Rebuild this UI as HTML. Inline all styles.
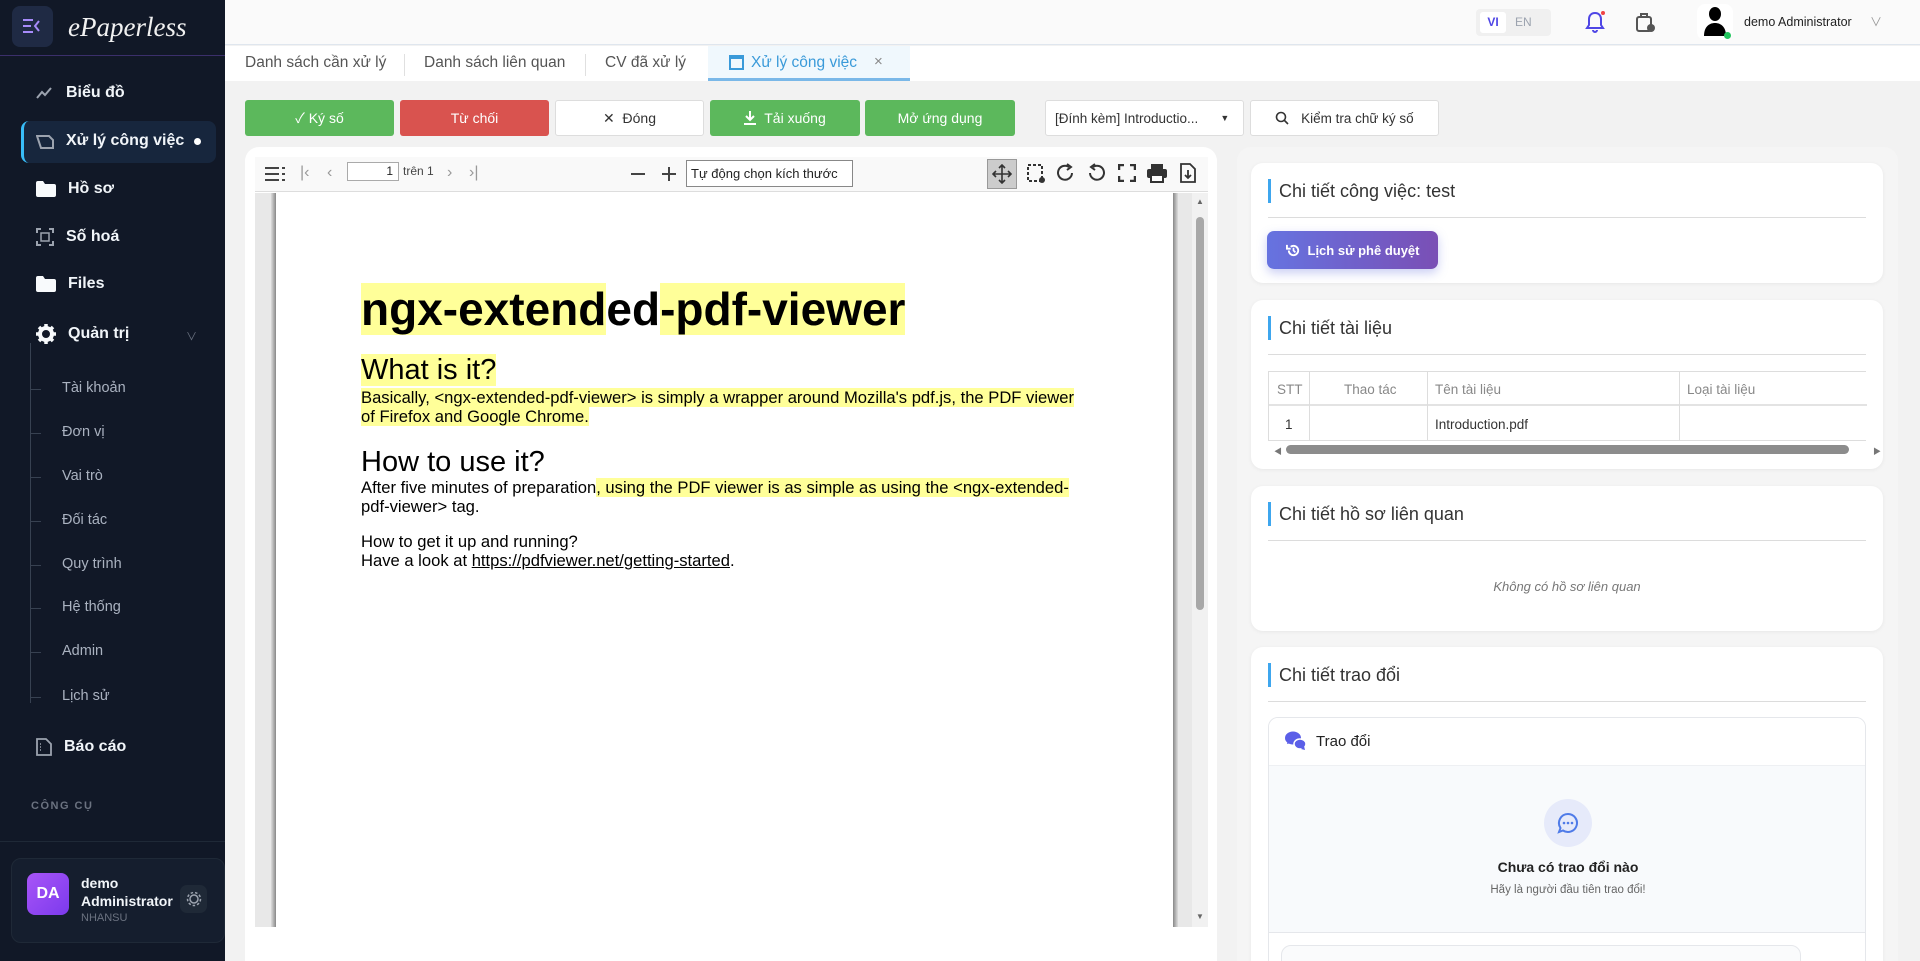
<!DOCTYPE html>
<html style="width:1920px;height:961px;overflow:hidden"><head><meta charset="utf-8">
<style>
*{box-sizing:border-box;margin:0;padding:0}
html,body{width:1920px;height:961px;overflow:hidden}
body{background:#f2f2f2;font-family:"Liberation Sans","Noto Sans CJK SC",sans-serif;position:relative;color:#333}
.a{position:absolute}
#sb{left:0;top:0;width:225px;height:961px;background:#111827;color:#e5e7eb}
.mi{position:absolute;left:36px;font-size:16px;font-weight:bold;color:#f1f5f9;display:flex;align-items:center;gap:12px}
.sub{position:absolute;left:62px;font-size:14.5px;color:#aab2c0}
.tick{position:absolute;left:31px;width:10px;height:1px;background:#374151}
.btn{position:absolute;top:100px;height:36px;border-radius:3px;font-size:14px;display:flex;align-items:center;justify-content:center;gap:8px;color:#fff}
.card{position:absolute;left:1251px;width:632px;background:#fff;border-radius:12px;box-shadow:0 1px 4px rgba(0,0,0,.06);overflow:hidden}
.ct{position:absolute;left:17px;font-size:18px;color:#333;border-left:3px solid #3ea6ee;padding-left:8px;line-height:24px}
.hr{position:absolute;left:17px;right:17px;height:1px;background:#dcdcdc}
.pl{position:absolute;left:361px;color:#000;font-family:"Liberation Sans",sans-serif;white-space:nowrap}
.hl{background:#ffff99}
.tb{position:absolute;top:164px;color:#555;font-size:16px}
</style></head><body>

<!-- header -->
<div class="a" style="left:225px;top:0;width:1695px;height:45px;background:#fafafa;border-bottom:1px solid #dfe6ee"></div>
<div class="a" style="left:1476px;top:9px;width:75px;height:27px;background:#f0f0f0;border-radius:4px"></div>
<div class="a" style="left:1480px;top:12px;width:26px;height:21px;background:#fff;border-radius:3px;font-size:12px;font-weight:bold;color:#4f46e5;text-align:center;line-height:21px">VI</div>
<div class="a" style="left:1515px;top:12px;font-size:12px;color:#9ca3af;line-height:21px">EN</div>
<svg class="a" style="left:1584px;top:10px" width="22" height="24" viewBox="0 0 22 24"><path d="M11 3c-4 0-6 3-6 6v6l-2 3h16l-2-3V9c0-3-2-6-6-6zM9 20a2 2 0 0 0 4 0" fill="none" stroke="#4f46e5" stroke-width="2"/><circle cx="19" cy="3" r="2" fill="#ef4444"/></svg>
<svg class="a" style="left:1634px;top:10px" width="24" height="24" viewBox="0 0 24 24"><rect x="3" y="7" width="14" height="14" rx="2" fill="none" stroke="#555" stroke-width="2"/><path d="M7 7V4h6v3" fill="none" stroke="#555" stroke-width="2"/><circle cx="17" cy="18" r="4" fill="#555"/></svg>
<div class="a" style="left:1697px;top:4px;width:36px;height:36px;background:#fff;border-radius:8px"></div>
<svg class="a" style="left:1703px;top:6px" width="24" height="30" viewBox="0 0 24 30"><ellipse cx="12" cy="8" rx="6" ry="7" fill="#000"/><path d="M1 30c0-9 5-13 11-13s11 4 11 13z" fill="#000"/></svg>
<div class="a" style="left:1724px;top:32px;width:7px;height:7px;border-radius:50%;background:#22c55e"></div>
<div class="a" style="left:1744px;top:15px;font-size:12.5px;color:#222">demo Administrator</div>
<div class="a" style="left:1870px;top:13px;font-size:12px;color:#999">&#x2228;</div>

<!-- tabs -->
<div class="a" style="left:225px;top:46px;width:1695px;height:35px;background:#fff"></div>
<div class="a" style="left:245px;top:54px;font-size:15.5px;color:#555">Danh sách cần xử lý</div>
<div class="a" style="left:404px;top:54px;width:1px;height:22px;background:#e0e0e0"></div>
<div class="a" style="left:424px;top:54px;font-size:15.5px;color:#555">Danh sách liên quan</div>
<div class="a" style="left:585px;top:54px;width:1px;height:22px;background:#e0e0e0"></div>
<div class="a" style="left:605px;top:54px;font-size:15.5px;color:#555">CV đã xử lý</div>
<div class="a" style="left:708px;top:46px;width:202px;height:35px;background:#f0f8fd;border-bottom:3px solid #7ab8e8"></div>
<svg class="a" style="left:729px;top:55px" width="15" height="15" viewBox="0 0 15 15"><rect x="1" y="1" width="13" height="13" fill="none" stroke="#3a9ad9" stroke-width="2"/><rect x="1" y="1" width="13" height="3" fill="#3a9ad9"/></svg>
<div class="a" style="left:751px;top:54px;font-size:15.5px;color:#3a9ad9">Xử lý công việc</div>
<div class="a" style="left:874px;top:53px;font-size:15px;color:#888">×</div>

<!-- action buttons -->
<div class="btn" style="left:245px;width:149px;background:#5cb85c">&#x2713; Ký số</div>
<div class="btn" style="left:400px;width:149px;background:#d9534f">Từ chối</div>
<div class="btn" style="left:555px;width:149px;background:#fff;color:#333;border:1px solid #ddd">✕&nbsp; Đóng</div>
<div class="btn" style="left:710px;width:150px;background:#5cb85c"><svg width="12" height="14" viewBox="0 0 12 14"><path d="M6 0v9M2 5l4 4 4-4" fill="none" stroke="#fff" stroke-width="2"/><path d="M0 13h12" stroke="#fff" stroke-width="2"/></svg> Tải xuống</div>
<div class="btn" style="left:865px;width:150px;background:#5cb85c">Mở ứng dụng</div>
<div class="btn" style="left:1045px;width:199px;background:#fff;color:#333;border:1px solid #ddd;justify-content:flex-start;padding-left:9px;font-size:13.5px">[Đính kèm] Introductio...<span style="margin-left:14px;font-size:9px">&#9660;</span></div>
<div class="btn" style="left:1250px;width:189px;background:#fff;color:#333;border:1px solid #ddd;font-size:13.5px"><svg width="14" height="14" viewBox="0 0 14 14"><circle cx="6" cy="6" r="4.5" fill="none" stroke="#333" stroke-width="1.6"/><path d="M9.5 9.5l3.5 3.5" stroke="#333" stroke-width="1.6"/></svg>&nbsp;Kiểm tra chữ ký số</div>

<!-- pdf viewer -->
<div class="a" style="left:245px;top:147px;width:972px;height:814px;background:#fff;border-radius:14px 14px 0 0"></div>
<div class="a" style="left:255px;top:157px;width:953px;height:35px;background:#f9f9f9;border-bottom:1px solid #ddd"></div>
<svg class="a" style="left:265px;top:167px" width="20" height="14" viewBox="0 0 20 14"><path d="M0 1h14M0 7h14M0 13h14M17 1h3M17 7h3M17 13h3" stroke="#444" stroke-width="2"/></svg>
<div class="tb" style="left:300px;color:#999">|‹</div>
<div class="tb" style="left:327px;color:#999">‹</div>
<div class="a" style="left:347px;top:162px;width:52px;height:19px;border:1px solid #aaa;background:#fff;font-size:12px;text-align:right;padding-right:5px;line-height:17px;color:#222">1</div>
<div class="a" style="left:403px;top:164px;font-size:12px;color:#444">trên 1</div>
<div class="tb" style="left:447px;color:#999">›</div>
<div class="tb" style="left:469px;color:#999">›|</div>
<div class="a" style="left:631px;top:173px;width:14px;height:2px;background:#444"></div>
<div class="a" style="left:662px;top:173px;width:14px;height:2px;background:#444"></div>
<div class="a" style="left:668px;top:167px;width:2px;height:14px;background:#444"></div>
<div class="a" style="left:686px;top:160px;width:167px;height:27px;border:1px solid #888;background:#fff;font-size:13px;line-height:25px;padding-left:4px;color:#222">Tự động chọn kích thước &#x2304;</div>
<div class="a" style="left:987px;top:159px;width:30px;height:30px;background:#ccc;border:1px solid #999"></div>
<svg class="a" style="left:992px;top:164px" width="20" height="20" viewBox="0 0 20 20"><path d="M10 1v18M1 10h18M7 4l3-3 3 3M7 16l3 3 3-3M4 7l-3 3 3 3M16 7l3 3-3 3" fill="none" stroke="#333" stroke-width="1.6"/></svg>
<svg class="a" style="left:1026px;top:163px" width="20" height="22" viewBox="0 0 20 22"><rect x="2" y="2" width="14" height="16" fill="none" stroke="#333" stroke-width="2" stroke-dasharray="3 2"/><circle cx="16" cy="17" r="3" fill="#333"/></svg>
<svg class="a" style="left:1056px;top:163px" width="20" height="20" viewBox="0 0 20 20"><path d="M16 10a7 7 0 1 1-3-6" fill="none" stroke="#333" stroke-width="2"/><path d="M11 1l4 3-4 3" fill="none" stroke="#333" stroke-width="2"/></svg>
<svg class="a" style="left:1086px;top:163px" width="20" height="20" viewBox="0 0 20 20"><path d="M4 10a7 7 0 1 0 3-6" fill="none" stroke="#333" stroke-width="2"/><path d="M9 1L5 4l4 3" fill="none" stroke="#333" stroke-width="2"/></svg>
<svg class="a" style="left:1118px;top:164px" width="18" height="18" viewBox="0 0 18 18"><path d="M1 6V1h5M12 1h5v5M17 12v5h-5M6 17H1v-5" fill="none" stroke="#333" stroke-width="2.5"/></svg>
<svg class="a" style="left:1146px;top:163px" width="22" height="20" viewBox="0 0 22 20"><rect x="5" y="1" width="12" height="5" fill="#333"/><rect x="1" y="6" width="20" height="9" rx="2" fill="#333"/><rect x="5" y="12" width="12" height="7" fill="#fff" stroke="#333" stroke-width="2"/></svg>
<svg class="a" style="left:1180px;top:163px" width="16" height="20" viewBox="0 0 16 20"><path d="M1 1h9l5 5v13H1z" fill="none" stroke="#333" stroke-width="1.8"/><path d="M8 7v8M5 12l3 3 3-3" fill="none" stroke="#333" stroke-width="1.8"/></svg>

<div class="a" style="left:255px;top:193px;width:953px;height:734px;background:#e8e8e8"></div>
<div class="a" style="left:271px;top:193px;width:5px;height:734px;background:linear-gradient(90deg,#ddd,#888)"></div>
<div class="a" style="left:276px;top:193px;width:897px;height:734px;background:#fff"></div>
<div class="a" style="left:1173px;top:193px;width:5px;height:734px;background:linear-gradient(90deg,#888,#ddd)"></div>
<div class="a" style="left:1192px;top:193px;width:16px;height:734px;background:#f1f1f1"></div>
<div class="a" style="left:1196px;top:217px;width:8px;height:393px;background:#a8a8a8;border-radius:4px"></div>
<div class="a" style="left:1196px;top:197px;font-size:8px;color:#666">▲</div>
<div class="a" style="left:1196px;top:912px;font-size:8px;color:#666">▼</div>

<div class="pl" style="top:282px;font-size:46px;font-weight:bold;line-height:55px"><span class="hl">ngx-extend</span>ed<span class="hl">-pdf-viewer</span></div>
<div class="pl" style="top:354px;font-size:29px;line-height:33px"><span class="hl">What is it?</span></div>
<div class="pl" style="top:388px;font-size:16.6px;line-height:19px"><span class="hl">Basically, &lt;ngx-extended-pdf-viewer&gt; is simply a wrapper around Mozilla's pdf.js, the PDF viewer</span><br><span class="hl">of Firefox and Google Chrome.</span></div>
<div class="pl" style="top:446px;font-size:29px;line-height:33px">How to use it?</div>
<div class="pl" style="top:478px;font-size:16.6px;line-height:19px">After five minutes of preparation<span class="hl">, using the PDF viewer is as simple as using the &lt;ngx-extended-</span><br>pdf-viewer&gt; tag.</div>
<div class="pl" style="top:532px;font-size:16.6px;line-height:19px">How to get it up and running?<br>Have a look at <u>https://pdfviewer.net/getting-started</u>.</div>

<!-- right panel -->
<div class="a" style="left:1237px;top:147px;width:661px;height:814px;background:#f5f5f5;border-radius:14px 14px 0 0"></div>

<div class="card" style="top:163px;height:120px">
<div class="ct" style="top:16px">Chi tiết công việc: test</div>
<div class="hr" style="top:54px"></div>
<div class="a" style="left:16px;top:68px;width:171px;height:38px;border-radius:7px;background:linear-gradient(90deg,#6673e0,#7a4fb5);box-shadow:0 4px 10px rgba(102,115,224,.35);color:#fff;font-size:13px;font-weight:bold;display:flex;align-items:center;justify-content:center;gap:7px"><svg width="15" height="15" viewBox="0 0 16 16"><path d="M3 8a5 5 0 1 0 2-4" fill="none" stroke="#fff" stroke-width="2"/><path d="M1 2v4h4" fill="none" stroke="#fff" stroke-width="2"/><path d="M8 5v3l2 2" fill="none" stroke="#fff" stroke-width="1.8"/></svg>Lịch sử phê duyệt</div>
</div>

<div class="card" style="top:300px;height:169px">
<div class="ct" style="top:16px">Chi tiết tài liệu</div>
<div class="hr" style="top:54px"></div>
<div class="a" style="left:17px;top:71px;width:598px;height:70px;border-top:1px solid #ddd;border-bottom:1px solid #ddd;border-left:1px solid #ddd;font-size:13.5px;color:#888">
 <div class="a" style="left:0;top:0;width:598px;height:34px;border-bottom:2px solid #e3e3e3"></div>
 <div class="a" style="left:40px;top:0;width:1px;height:69px;background:#ddd"></div>
 <div class="a" style="left:158px;top:0;width:1px;height:69px;background:#ddd"></div>
 <div class="a" style="left:410px;top:0;width:1px;height:69px;background:#ddd"></div>
 <div class="a" style="left:8px;top:10px">STT</div>
 <div class="a" style="left:75px;top:10px">Thao tác</div>
 <div class="a" style="left:166px;top:10px">Tên tài liệu</div>
 <div class="a" style="left:418px;top:10px">Loại tài liệu</div>
 <div class="a" style="left:16px;top:45px;color:#333">1</div>
 <div class="a" style="left:166px;top:45px;color:#333">Introduction.pdf</div>
</div>
<div class="a" style="left:23px;top:146px;font-size:8px;color:#777">◀</div>
<div class="a" style="left:35px;top:145px;width:563px;height:9px;background:#8c8c8c;border-radius:5px"></div>
<div class="a" style="left:622px;top:146px;font-size:8px;color:#777">▶</div>
</div>

<div class="card" style="top:486px;height:145px">
<div class="ct" style="top:16px">Chi tiết hồ sơ liên quan</div>
<div class="hr" style="top:54px"></div>
<div class="a" style="left:0;width:632px;top:93px;text-align:center;font-size:13px;font-style:italic;color:#777">Không có hồ sơ liên quan</div>
</div>

<div class="card" style="top:647px;height:314px;border-radius:12px 12px 0 0">
<div class="ct" style="top:16px">Chi tiết trao đổi</div>
<div class="hr" style="top:54px"></div>
<div class="a" style="left:17px;top:70px;width:598px;height:280px;border:1px solid #e5e7eb;border-radius:10px;overflow:hidden">
 <div class="a" style="left:0;top:0;width:598px;height:48px;background:#fff;border-bottom:1px solid #eef0f3"></div>
 <svg class="a" style="left:16px;top:13px" width="22" height="20" viewBox="0 0 22 20"><ellipse cx="8" cy="7" rx="8" ry="6.5" fill="#5b5fe8"/><path d="M2 13l1-4 3 3z" fill="#5b5fe8"/><ellipse cx="15" cy="13" rx="6" ry="5" fill="#5b5fe8" stroke="#fff" stroke-width="1.5"/><path d="M20 19l-1-4-3 3z" fill="#5b5fe8"/></svg>
 <div class="a" style="left:47px;top:15px;font-size:15px;color:#222">Trao đổi</div>
 <div class="a" style="left:0;top:48px;width:598px;height:167px;background:#f8fafc;border-bottom:1px solid #e5e7eb"></div>
 <div class="a" style="left:275px;top:81px;width:48px;height:48px;border-radius:50%;background:#e6eafa"></div>
 <svg class="a" style="left:288px;top:94px" width="22" height="22" viewBox="0 0 22 22"><path d="M11 2a9 9 0 1 1-5 16.5L2 20l1.5-4A9 9 0 0 1 11 2z" fill="none" stroke="#4f7be8" stroke-width="2"/><circle cx="7" cy="11" r="1.3" fill="#4f7be8"/><circle cx="11" cy="11" r="1.3" fill="#4f7be8"/><circle cx="15" cy="11" r="1.3" fill="#4f7be8"/></svg>
 <div class="a" style="left:0;width:598px;top:141px;text-align:center;font-size:14px;font-weight:bold;color:#222">Chưa có trao đổi nào</div>
 <div class="a" style="left:0;width:598px;top:166px;text-align:center;font-size:11.5px;color:#666">Hãy là người đầu tiên trao đổi!</div>
 <div class="a" style="left:12px;top:227px;width:520px;height:40px;border:1px solid #e5e7eb;border-radius:10px;background:#fafbfc"></div>
</div>
</div>

<!-- sidebar -->
<div id="sb" class="a">
 <div class="a" style="left:0;top:55px;width:225px;height:1px;background:#3b2f6b"></div>
 <div class="a" style="left:12px;top:6px;width:41px;height:41px;border-radius:8px;background:#1f2a44"></div>
 <svg class="a" style="left:23px;top:19px" width="18" height="14" viewBox="0 0 18 14"><path d="M0 1h10M0 7h8M0 13h10" stroke="#a78bfa" stroke-width="2"/><path d="M16 2l-4 5 4 5" fill="none" stroke="#a78bfa" stroke-width="2"/></svg>
 <div class="a" style="left:68px;top:12px;font-family:'Liberation Serif',serif;font-style:italic;font-size:27px;color:#f1f1f1">ePaperless</div>

 <div class="mi" style="top:84px"><svg width="18" height="14" viewBox="0 0 18 14"><path d="M1 12l5-6 3 3 6-7" fill="none" stroke="#9ca3af" stroke-width="2"/></svg>Biểu đồ</div>
 <div class="a" style="left:21px;top:121px;width:195px;height:42px;border-radius:8px;background:#17263d;border-left:3px solid #38bdf8"></div>
 <div class="mi" style="top:132px"><svg width="18" height="16" viewBox="0 0 18 16"><path d="M1 3h12l4 4v8H5z" fill="none" stroke="#9ca3af" stroke-width="2"/></svg>Xử lý công việc</div>
 <div class="a" style="left:194px;top:138px;width:7px;height:7px;border-radius:50%;background:#fff"></div>
 <div class="mi" style="top:180px"><svg width="20" height="16" viewBox="0 0 20 16"><path d="M0 2a2 2 0 0 1 2-2h5l2 3h9a2 2 0 0 1 2 2v9a2 2 0 0 1-2 2H2a2 2 0 0 1-2-2z" fill="#f8fafc"/></svg>Hồ sơ</div>
 <div class="mi" style="top:228px"><svg width="18" height="18" viewBox="0 0 18 18"><path d="M1 5V1h4M13 1h4v4M17 13v4h-4M5 17H1v-4" fill="none" stroke="#9ca3af" stroke-width="2"/><rect x="5" y="5" width="8" height="8" fill="none" stroke="#9ca3af" stroke-width="1.5"/></svg>Số hoá</div>
 <div class="mi" style="top:275px"><svg width="20" height="16" viewBox="0 0 20 16"><path d="M0 2a2 2 0 0 1 2-2h5l2 3h9a2 2 0 0 1 2 2v9a2 2 0 0 1-2 2H2a2 2 0 0 1-2-2z" fill="#f8fafc"/></svg>Files</div>
 <div class="mi" style="top:324px"><svg width="20" height="20" viewBox="0 0 20 20"><circle cx="10" cy="10" r="6" fill="none" stroke="#f8fafc" stroke-width="4"/><path d="M10 0v4M10 16v4M0 10h4M16 10h4M3 3l3 3M14 14l3 3M17 3l-3 3M3 17l3-3" stroke="#f8fafc" stroke-width="3.5"/></svg>Quản trị</div>
 <div class="a" style="left:186px;top:328px;font-size:11px;color:#6b7280">&#x2228;</div>
 <div class="a" style="left:30px;top:343px;width:1px;height:360px;background:#374151"></div>
 <div class="tick" style="top:389px"></div><div class="sub" style="top:380px">Tài khoản</div>
 <div class="tick" style="top:433px"></div><div class="sub" style="top:424px">Đơn vị</div>
 <div class="tick" style="top:477px"></div><div class="sub" style="top:468px">Vai trò</div>
 <div class="tick" style="top:521px"></div><div class="sub" style="top:512px">Đối tác</div>
 <div class="tick" style="top:565px"></div><div class="sub" style="top:556px">Quy trình</div>
 <div class="tick" style="top:608px"></div><div class="sub" style="top:599px">Hệ thống</div>
 <div class="tick" style="top:652px"></div><div class="sub" style="top:643px">Admin</div>
 <div class="tick" style="top:697px"></div><div class="sub" style="top:688px">Lịch sử</div>
 <div class="mi" style="top:738px"><svg width="16" height="18" viewBox="0 0 16 18"><path d="M1 1h9l5 5v11H1z" fill="none" stroke="#9ca3af" stroke-width="1.8"/><path d="M4 6h1M4 9h1M4 12h1" stroke="#9ca3af" stroke-width="1.5"/></svg>Báo cáo</div>
 <div class="a" style="left:31px;top:800px;font-size:11px;font-weight:bold;letter-spacing:1.5px;color:#6b7280">CÔNG CỤ</div>
 <div class="a" style="left:0;top:841px;width:225px;height:1px;background:#1f2937"></div>
 <div class="a" style="left:11px;top:858px;width:214px;height:85px;border-radius:10px;background:#151e2e;border:1px solid #1f2937"></div>
 <div class="a" style="left:27px;top:873px;width:42px;height:42px;border-radius:8px;background:linear-gradient(135deg,#a855f7,#7c3aed);color:#fff;font-weight:bold;font-size:16px;text-align:center;line-height:42px">DA</div>
 <div class="a" style="left:81px;top:874px;font-size:14px;font-weight:bold;color:#f1f5f9;line-height:18px">demo<br>Administrator</div>
 <div class="a" style="left:81px;top:912px;font-size:11px;color:#6b7280">NHANSU</div>
 <div class="a" style="left:180px;top:885px;width:27px;height:28px;border-radius:7px;background:#1f2937"></div>
 <svg class="a" style="left:186px;top:891px" width="16" height="16" viewBox="0 0 16 16"><circle cx="8" cy="8" r="4" fill="none" stroke="#9ca3af" stroke-width="1.5"/><circle cx="8" cy="8" r="6.5" fill="none" stroke="#9ca3af" stroke-width="1.5" stroke-dasharray="2.5 2"/></svg>
</div>
</body></html>
